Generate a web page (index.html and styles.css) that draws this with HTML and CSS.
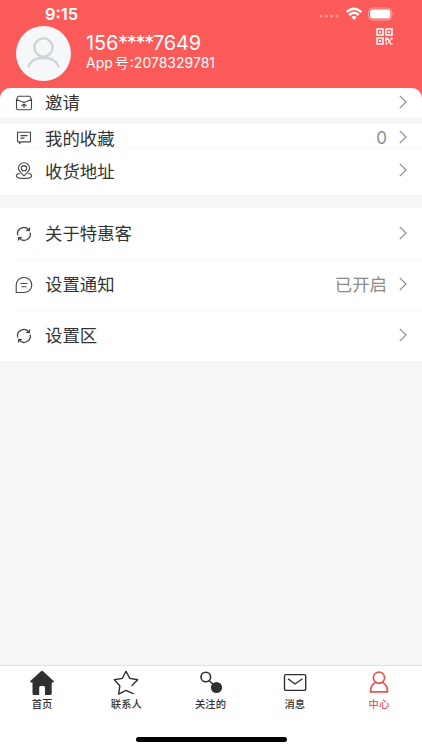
FILE: index.html
```html
<!DOCTYPE html>
<html lang="zh-CN">
<head>
    <meta charset="UTF-8">
    <meta name="viewport" content="width=device-width, initial-scale=1.0">
    <title>中心</title>
    <link rel="stylesheet" href="styles.css">
</head>
<body>
    <svg class="symbols">
        <symbol id="arrow" viewBox="0 0 8 14">
            <path d="M0.8 0.8L7 7L0.8 13.2" fill="none" stroke="#888" stroke-width="1.1"/>
        </symbol>
        <symbol id="refresh" viewBox="0 0 18 18">
            <path d="M2.7 10.300A6.300 6.300 0 0 1 14 5.200M15.200 7.700A6.300 6.300 0 0 1 4 12.800M14.600 2.500L14.300 5.600L11.200 5.300M3.400 15.500L3.700 12.400L6.800 12.700"/>
        </symbol>
    </svg>

    <header class="header">
        <div class="status-bar">
            <span class="time">9:15</span>
            <div class="status-icons">
                <svg class="dots" width="20" height="4" viewBox="0 0 20 4" fill="#fc9997">
                    <circle cx="2" cy="2" r="1.500"/>
                    <circle cx="7.300" cy="2" r="1.500"/>
                    <circle cx="12.600" cy="2" r="1.500"/>
                    <circle cx="17.900" cy="2" r="1.500"/>
                </svg>
                <svg class="wifi" width="18" height="14" viewBox="0 0 18 14" fill="none" stroke="#fff" stroke-width="2.4">
                    <path d="M1.6 5.2Q9-1.7 16.4 5.2M4.2 8Q9 3.5 13.8 8"/>
                    <path d="M6.3 10.1Q9 7.9 11.7 10.1L9 13Z" fill="#fff" stroke="none"/>
                </svg>
                <svg class="battery" width="27" height="14" viewBox="0 0 27 14">
                    <rect x=".6" y="1" width="23" height="12" rx="3.8" fill="none" stroke="#fca5a3"/>
                    <rect x="2.1" y="2.4" width="20.2" height="9.2" rx="2.5" fill="#fff"/>
                    <path d="M25 5Q27 7 25 9Z" fill="#fca5a3"/>
                </svg>
            </div>
        </div>
        <div class="profile">
            <div class="avatar">
                <svg width="34" height="34" viewBox="0 0 34 34" fill="none" stroke="#cfd4d7" stroke-width="2.3">
                    <circle cx="16.500" cy="10.500" r="9.1"/>
                    <path d="M1.500 29.500C4.500 17.800 28.500 17.800 31.500 29.500" stroke-linecap="round"/>
                </svg>
            </div>
            <div class="user">
                <div class="phone">156<span class="mask">****</span>7649</div>
                <div class="app-id">App<span class="hao">号</span>:2078329781</div>
            </div>
            <svg class="qrcode" width="17" height="17" viewBox="0 0 17 17" fill="#fff">
                <path d="M1 1h6v6H1zM10 1h6v6h-6zM1 10h6v6H1z" fill="none" stroke="#fff" stroke-width="1.5"/>
                <path d="M3 3h2v2H3zM12 3h2v2h-2zM3 12h2v2H3zM9.400 9.400h3v2h2v2h-2v-1.500h-1.500v1.500H9.400zM14.600 9.400h2v2h-2zM9.400 14.600h2v2h-2zM12.400 13.400h2v1.500h2.200v1.700h-2.600v-1.400h-1.600z"/>
            </svg>
        </div>
    </header>

    <main class="menu">
        <section class="group group-invite">
            <a class="row">
                <svg class="icon" viewBox="0 0 18 18">
                    <path d="M1.500 5.200V14Q1.500 15.800 3.300 15.800H14.700Q16.500 15.800 16.500 14V5.200M1.500 5.400L3.200 2.300H14.800L16.500 5.400L11.700 7.600Q9 8.700 6.300 7.600ZM9 10V14M6.600 12L9 9.900L11.400 12"/>
                </svg>
                <span class="label">邀请</span>
                <svg class="arrow"><use href="#arrow"/></svg>
            </a>
        </section>
        <section class="group group-mine">
            <a class="row row-favorite">
                <svg class="icon" viewBox="0 0 18 18">
                    <path d="M3 3.300H15Q15.500 3.300 15.500 3.800V12.300Q15.500 12.900 14.900 12.900H6.500L4.600 14.300V12.900H3.100Q2.500 12.900 2.500 12.300V3.900Q2.500 3.300 3 3.300ZM5.500 6.600H12.500M5.500 9.100H9.500"/>
                </svg>
                <span class="label">我的收藏</span>
                <span class="value count">0</span>
                <svg class="arrow"><use href="#arrow"/></svg>
            </a>
            <a class="row row-address">
                <svg class="icon" viewBox="0 0 18 18">
                    <path d="M9 14C6.300 11 3.500 9.100 3.500 6.300A5.500 5.500 0 0 1 14.500 6.300C14.500 9.100 11.700 11 9 14ZM4.600 11.200C-1.400 13.200 1.300 16.500 9 16.500S19.400 13.200 13.400 11.200"/>
                    <circle cx="9" cy="6.300" r="2.700"/>
                </svg>
                <span class="label">收货地址</span>
                <svg class="arrow"><use href="#arrow"/></svg>
            </a>
        </section>
        <section class="group group-setting">
            <a class="row">
                <svg class="icon refresh"><use href="#refresh"/></svg>
                <span class="label">关于特惠客</span>
                <svg class="arrow"><use href="#arrow"/></svg>
            </a>
            <a class="row">
                <svg class="icon" viewBox="0 0 18 18">
                    <path d="M1.200 16.500V9A7.800 7.500 0 1 1 9 16.500ZM5.500 7.500H12.500M6.500 10.700H11.500"/>
                </svg>
                <span class="label">设置通知</span>
                <span class="value">已开启</span>
                <svg class="arrow"><use href="#arrow"/></svg>
            </a>
            <a class="row">
                <svg class="icon refresh"><use href="#refresh"/></svg>
                <span class="label">设置区</span>
                <svg class="arrow"><use href="#arrow"/></svg>
            </a>
        </section>
    </main>

    <footer class="footer">
        <nav class="tab-bar">
            <a class="tab">
                <svg viewBox="0 0 28 28">
                    <path d="M12.700 2.400Q14 1.200 15.300 2.400L25.700 12Q26.500 13.300 25 13.500H23.700V24.500Q23.700 26 22.200 26H17V18.500Q17 17 15.500 17H12.700Q11.200 17 11.200 18.500V26H6Q4.500 26 4.500 24.500V13.500H3Q1.500 13.300 2.300 12Z" fill="#303030"/>
                </svg>
                <span>首页</span>
            </a>
            <a class="tab">
                <svg viewBox="0 0 28 28">
                    <path d="M21.200 24.700L14 21.400L6.700 25.200L7.800 16.800L2.300 10.800L10.300 9.400L14 2.300L17.700 9.400L25.700 10.800L20 16.500" fill="none" stroke="#303030" stroke-width="1.400" stroke-linejoin="round" stroke-linecap="round"/>
                </svg>
                <span>联系人</span>
            </a>
            <a class="tab">
                <svg viewBox="0 0 28 28">
                    <circle cx="8.800" cy="8" r="4.800" fill="none" stroke="#303030" stroke-width="1.600"/>
                    <path d="M12 11.500L17 16" stroke="#303030" stroke-width="1.600"/>
                    <circle cx="19.500" cy="18.500" r="5.600" fill="#303030"/>
                </svg>
                <span>关注的</span>
            </a>
            <a class="tab">
                <svg viewBox="0 0 28 28">
                    <path d="M5 5.600H23.200Q24.700 5.600 24.700 7.100V19.900Q24.700 21.400 23.200 21.400H5Q3.500 21.400 3.500 19.900V7.100Q3.500 5.600 5 5.600ZM7 9.700L14 15L21.500 9.700" fill="none" stroke="#303030" stroke-width="1.400"/>
                </svg>
                <span>消息</span>
            </a>
            <a class="tab active">
                <svg viewBox="0 0 28 28">
                    <g fill="none" stroke="#e95655" stroke-width="1.700" stroke-linejoin="round">
                        <circle cx="14" cy="8.700" r="5.600"/>
                        <path d="M10.700 13.200Q5.500 16 5.500 22.900H22.500Q22.500 16 17.300 13.200"/>
                    </g>
                </svg>
                <span>中心</span>
            </a>
        </nav>
        <div class="home-indicator"></div>
    </footer>
</body>
</html>
```
FILE: styles.css
```css
* {
    box-sizing: border-box;
}

body {
    margin: 0;
    height: 750px;
    display: flex;
    flex-direction: column;
    overflow: hidden;
    background: #f6f6f8;
    color: #333;
    font-family: Inter, "Noto Sans CJK SC", sans-serif;
}

.symbols {
    display: none;
}

/* 顶部 */
.header {
    height: 98px;
    flex: none;
    background: #fa5b59;
    color: #fff;
}

.status-bar {
    height: 26px;
    padding: 2px 27px 0 45px;
    display: flex;
    justify-content: space-between;
    align-items: center;
}

.time {
    font-size: 16.5px;
    font-weight: 600;
    line-height: 22px;
}

.status-icons {
    display: flex;
    align-items: center;
}

.dots {
    margin: 4px 6px 0 0;
}

.battery {
    margin-left: 5px;
}

.profile {
    display: flex;
    padding: 0 29px 0 16px;
}

.avatar {
    width: 55px;
    height: 55px;
    border-radius: 50%;
    background: #f6f7f9;
    display: flex;
    justify-content: center;
    align-items: center;
}

.user {
    flex: 1;
    padding: 5px 0 0 15px;
    white-space: nowrap;
}

.phone {
    font-size: 20px;
    line-height: 24px;
    letter-spacing: -0.2px;
}

.mask {
    letter-spacing: -1.3px;
}

.app-id {
    font-size: 14px;
    line-height: 16px;
}

.hao {
    margin: 0 1px 0 2px;
}

.qrcode {
    margin-top: 2px;
}

/* 菜单列表 */
.menu {
    flex: 1;
    margin-top: -10px;
}

.group {
    background: #fff;
}

.group-invite {
    border-radius: 10px 10px 0 0;
    margin-bottom: 7px;
}

.group-mine {
    margin-bottom: 13px;
}

.row {
    display: flex;
    align-items: center;
    height: 51px;
    padding: 0 15px;
    position: relative;
}

.group-invite .row {
    height: 29px;
}

.row-favorite {
    height: 23px;
    padding-top: 5px;
}

.row-address {
    height: 48px;
}

/* 分割线 */
.row + .row::before {
    content: "";
    position: absolute;
    top: 0;
    left: 16px;
    right: 0;
    height: 1px;
    background: #f8f8f8;
}

.icon {
    width: 18px;
    height: 18px;
    flex: none;
    fill: none;
    stroke: #444;
    stroke-width: 1.1;
}

.refresh {
    stroke-width: 1.3;
}

.label {
    flex: 1;
    margin-left: 12px;
    padding-top: 1px;
    font-size: 17.4px;
    line-height: 20px;
}

.value {
    margin-right: 12px;
    color: #8c8c8c;
    font-size: 17.4px;
    line-height: 20px;
}

.count {
    font-size: 17px;
}

.arrow {
    width: 8px;
    height: 14px;
    flex: none;
    margin-bottom: 2px;
}

/* 底部导航 */
.footer {
    height: 85px;
    flex: none;
    background: #fff;
    border-top: 1px solid #e2e2e4;
}

.tab-bar {
    display: flex;
    height: 71px;
    padding: 3px 1px 0 0;
}

.tab {
    flex: 1;
    display: flex;
    flex-direction: column;
    align-items: center;
    font-size: 10.3px;
    line-height: 14px;
    font-weight: 500;
}

.tab svg {
    width: 28px;
    height: 28px;
}

.tab.active {
    color: #e95655;
}

.home-indicator {
    width: 151px;
    height: 5px;
    margin: 0 auto;
    border-radius: 3px;
    background: #000;
}
```
